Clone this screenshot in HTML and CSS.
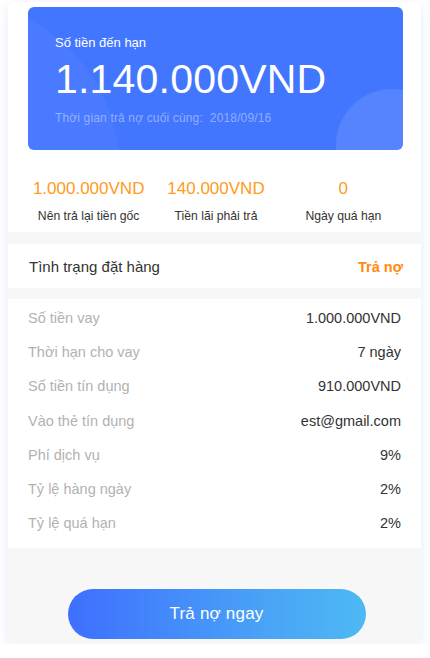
FILE: index.html
```html
<!DOCTYPE html>
<html lang="vi">
<head>
<meta charset="utf-8">
<title>Trả nợ</title>
<link rel="stylesheet" href="styles.css">
</head>
<body>
<div class="card">
  <div class="hero-wrap">
    <div class="hero">
      <span class="circle circle-left"></span>
      <span class="circle circle-right"></span>
      <div class="hero-label">Số tiền đến hạn</div>
      <div class="hero-amount">1.140.000VND</div>
      <div class="hero-date">Thời gian trả nợ cuối cùng:&nbsp; 2018/09/16</div>
    </div>
  </div>
  <div class="stats">
    <div class="stat">
      <div class="stat-value">1.000.000VND</div>
      <div class="stat-label">Nên trả lại tiền gốc</div>
    </div>
    <div class="stat">
      <div class="stat-value">140.000VND</div>
      <div class="stat-label">Tiền lãi phải trả</div>
    </div>
    <div class="stat">
      <div class="stat-value">0</div>
      <div class="stat-label">Ngày quá hạn</div>
    </div>
  </div>
  <div class="band band-a"></div>
  <div class="status">
    <span class="status-title">Tình trạng đặt hàng</span>
    <span class="status-value">Trả nợ</span>
  </div>
  <div class="band band-b"></div>
  <div class="list">
    <div class="row"><span class="key">Số tiền vay</span><span class="val">1.000.000VND</span></div>
    <div class="row"><span class="key">Thời hạn cho vay</span><span class="val">7 ngày</span></div>
    <div class="row"><span class="key">Số tiền tín dụng</span><span class="val">910.000VND</span></div>
    <div class="row"><span class="key">Vào thẻ tín dụng</span><span class="val">est@gmail.com</span></div>
    <div class="row"><span class="key">Phí dịch vụ</span><span class="val">9%</span></div>
    <div class="row"><span class="key">Tỷ lệ hàng ngày</span><span class="val">2%</span></div>
    <div class="row"><span class="key">Tỷ lệ quá hạn</span><span class="val">2%</span></div>
  </div>
  <div class="footer">
    <button class="pay-btn">Trả nợ ngay</button>
  </div>
</div>
</body>
</html>
```

FILE: styles.css
```css
* { box-sizing: border-box; }

body {
  margin: 0;
  padding: 2px 9px 0 8px;
  background: #ffffff;
  font-family: "Liberation Sans", "Noto Sans", Arial, sans-serif;
}

.card {
  background: #ffffff;
  border-radius: 6px;
  box-shadow: 0 3px 12px rgba(70, 100, 200, 0.13);
  overflow: hidden;
}

.hero-wrap {
  padding: 5px 18px 0 20px;
}

.hero {
  position: relative;
  overflow: hidden;
  background: #4376ff;
  border-radius: 6px;
  padding: 28px 27px 24px;
  color: #ffffff;
}

.circle {
  position: absolute;
  border-radius: 50%;
  pointer-events: none;
}

.circle-left {
  left: -248px;
  top: -7px;
  width: 340px;
  height: 340px;
  background: rgba(255, 255, 255, 0.035);
}

.circle-right {
  left: 308px;
  top: 82px;
  width: 112px;
  height: 112px;
  background: rgba(255, 255, 255, 0.1);
}

.hero-label,
.hero-amount,
.hero-date {
  position: relative;
}

.hero-label {
  font-size: 13px;
  line-height: 16px;
}

.hero-amount {
  margin-top: 8px;
  font-size: 41px;
  line-height: 41px;
  letter-spacing: 0.2px;
}

.hero-date {
  margin-top: 11px;
  font-size: 12px;
  line-height: 15px;
  letter-spacing: 0.15px;
  color: rgba(255, 255, 255, 0.42);
}

.stats {
  display: grid;
  grid-template-columns: repeat(3, 1fr);
  padding: 28px 14px 8px 17px;
  text-align: center;
}

.stat-value {
  font-size: 17px;
  line-height: 22px;
  color: #ff9a22;
}

.stat-label {
  margin-top: 8px;
  font-size: 12.2px;
  line-height: 16px;
  color: #333333;
}

.band {
  background: #f7f7f7;
}

.band-a { height: 12px; }
.band-b { height: 11px; }

.status {
  height: 44px;
  display: flex;
  align-items: center;
  justify-content: space-between;
  padding: 1px 18px 0 21px;
}

.status-title {
  font-size: 15px;
  color: #333333;
}

.status-value {
  font-size: 14.5px;
  font-weight: bold;
  color: #ff8a0d;
}

.list {
  padding: 2px 20px 8px 20px;
}

.row {
  display: flex;
  justify-content: space-between;
  align-items: center;
  height: 34.2px;
  font-size: 14.5px;
}

.key {
  color: #b2b2b2;
}

.val {
  color: #333333;
}

.footer {
  background: #f7f7f7;
  height: 96px;
  display: flex;
  justify-content: center;
  align-items: flex-end;
  padding: 0 0 5px 4px;
}

.pay-btn {
  width: 298px;
  height: 50px;
  border: none;
  border-radius: 25px;
  background: linear-gradient(90deg, #3e6fff 0%, #4aa6f6 70%, #4db9f4 100%);
  color: #ffffff;
  font-family: "Liberation Sans", "Noto Sans", Arial, sans-serif;
  font-size: 17px;
  letter-spacing: 0.2px;
}
```
